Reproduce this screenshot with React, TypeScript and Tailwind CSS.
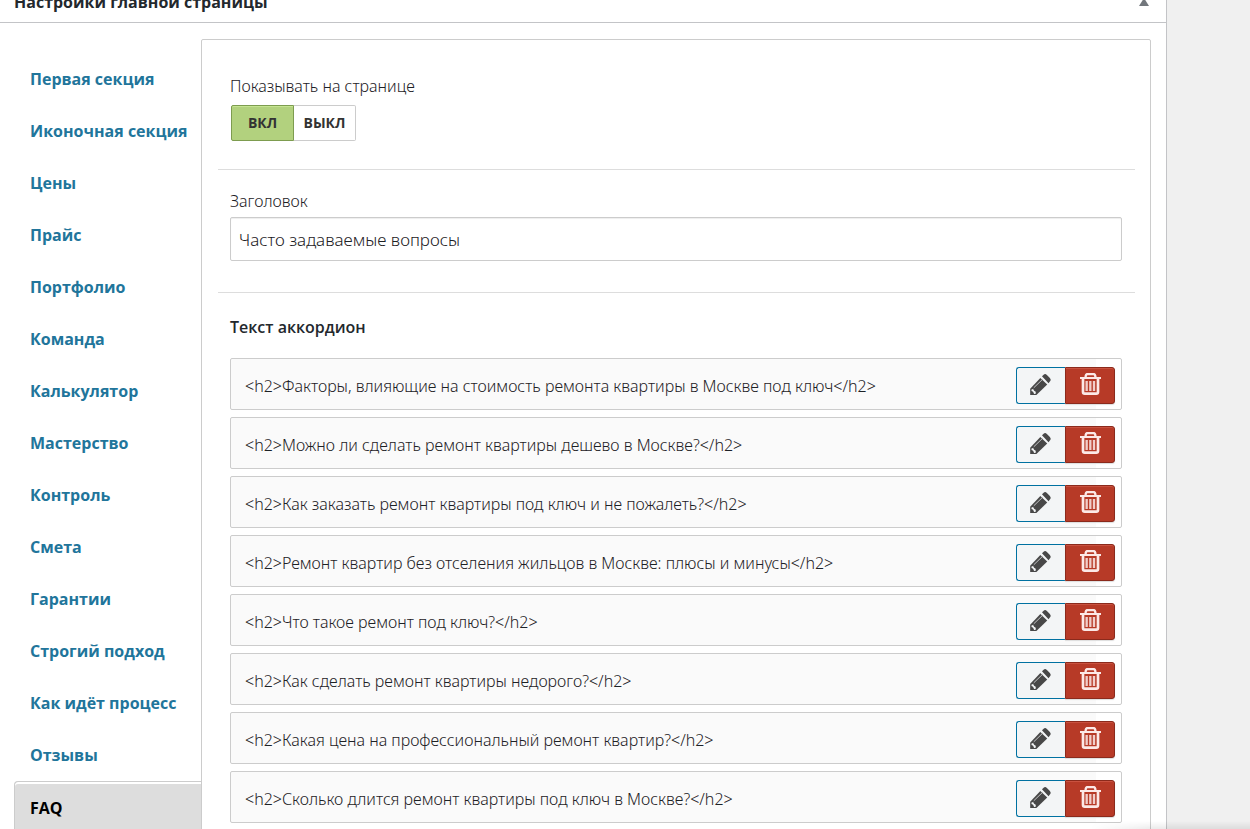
import { useState } from 'react';

const sections = [
  'Первая секция',
  'Иконочная секция',
  'Цены',
  'Прайс',
  'Портфолио',
  'Команда',
  'Калькулятор',
  'Мастерство',
  'Контроль',
  'Смета',
  'Гарантии',
  'Строгий подход',
  'Как идёт процесс',
  'Отзывы',
];

const questions = [
  '<h2>Факторы, влияющие на стоимость ремонта квартиры в Москве под ключ</h2>',
  '<h2>Можно ли сделать ремонт квартиры дешево в Москве?</h2>',
  '<h2>Как заказать ремонт квартиры под ключ и не пожалеть?</h2>',
  '<h2>Ремонт квартир без отселения жильцов в Москве: плюсы и минусы</h2>',
  '<h2>Что такое ремонт под ключ?</h2>',
  '<h2>Как сделать ремонт квартиры недорого?</h2>',
  '<h2>Какая цена на профессиональный ремонт квартир?</h2>',
  '<h2>Сколько длится ремонт квартиры под ключ в Москве?</h2>',
];

function PencilIcon() {
  return (
    <svg viewBox="0 0 63 64" className="h-[21px] w-[21px]" aria-hidden="true">
      <path d="M31 12 52 32 19 64H0V45Z" fill="#484848" />
      <path d="M36 7 41 2Q46-2 51 3L60 12Q65 18 60 23L56 28Z" fill="#484848" />
      <path d="M11 42 38 16" stroke="#c4c5c6" strokeWidth="3" fill="none" />
      <path d="M4 47 9 46 12 51 17 54 17 60 12 61 9 54 4 52Z" fill="#f3f5f6" />
    </svg>
  );
}

function TrashIcon() {
  return (
    <svg viewBox="0 0 63 66" className="h-[22px] w-[21px]" fill="none" stroke="#fce9e7" aria-hidden="true">
      <path d="M0 15H63" strokeWidth="6" />
      <path d="M17 14V9Q18 3 23 3H40Q45 3 46 9V14" strokeWidth="7" />
      <path d="M9 17V57Q9 62 14 62H49Q54 62 54 57V17" strokeWidth="8" />
      <path d="M20 24V54M31 24V54M42 24V54" strokeWidth="7" strokeOpacity="0.85" />
    </svg>
  );
}

export default function App() {
  const [enabled, setEnabled] = useState(true);
  const [title, setTitle] = useState('Часто задаваемые вопросы');

  return (
    <div className="relative flex h-screen overflow-hidden bg-[#f0f0f0] font-['Open_Sans',sans-serif] text-[#1d2125]">
      <main className="flex min-w-0 grow flex-col border-r border-[#c3c4c7] bg-white">
        <header className="flex h-[23px] shrink-0 items-end justify-between border-b border-[#c3c4c7] pr-[17px] pb-2 pl-[14px]">
          <h1 className="text-base leading-6 font-bold text-[#23282d]">Настройки главной страницы</h1>
          <button type="button" aria-label="Свернуть панель" className="flex h-4 items-end pb-2">
            <svg viewBox="0 0 10 8" className="h-2 w-[10px]" aria-hidden="true">
              <path d="M5 0 10 8H0Z" fill="#72777c" />
            </svg>
          </button>
        </header>

        <div className="flex grow items-stretch pt-4 pr-[15px] pl-[14px]">
          <nav className="flex w-[187px] shrink-0 flex-col pt-[14px]">
            {sections.map((name) => (
              <a
                key={name}
                href="#"
                className="flex h-[52px] shrink-0 items-center pl-4 text-base font-bold whitespace-nowrap text-[#21759b]"
              >
                {name}
              </a>
            ))}
            <a
              href="#"
              aria-current="page"
              className="flex h-[52px] shrink-0 items-center rounded-tl-sm border-t border-l border-[#cccccc] bg-[#dddddd] pl-[15px] text-base font-bold text-black shadow-[inset_0_2px_0_#ffffff]"
            >
              FAQ
            </a>
          </nav>

          <div className="min-w-0 grow rounded-t-xs border border-[#cccccc] pr-[15px] pl-4">
            <section className="h-[130px] border-b border-[#dddddd] px-3 pt-[34px]">
              <p id="visibility" className="font-['Noto_Sans',sans-serif] text-base leading-6 font-light">Показывать на странице</p>
              <div role="group" aria-labelledby="visibility" className="mt-[7px] ml-px flex text-sm font-bold text-[#333333]">
                <button
                  type="button"
                  aria-pressed={enabled}
                  onClick={() => setEnabled(true)}
                  className="h-9 w-[63px] rounded-l-xs border border-[#7d9c4f] bg-[#b2d17e] shadow-[inset_0_1px_0_#c5e491]"
                >
                  ВКЛ
                </button>
                <button
                  type="button"
                  aria-pressed={!enabled}
                  onClick={() => setEnabled(false)}
                  className="h-9 w-[62px] rounded-r-xs border border-l-0 border-[#cccccc] bg-white"
                >
                  ВЫКЛ
                </button>
              </div>
            </section>

            <section className="h-[123px] border-b border-[#dddddd] pt-[19px] pr-[13px] pl-3">
              <label htmlFor="title" className="block font-['Noto_Sans',sans-serif] text-base leading-6 font-light">Заголовок</label>
              <input
                id="title"
                type="text"
                value={title}
                onChange={(event) => setTitle(event.target.value)}
                className="mt-1 block h-11 w-full rounded-xs border border-[#cccccc] bg-white px-2 font-['Noto_Sans',sans-serif] text-[17px] font-light shadow-[inset_0_1px_1px_#eeeeee]"
              />
            </section>

            <section className="pt-[22px] pr-[13px] pl-3">
              <h2 className="text-base leading-6 font-semibold text-[#23282d]">Текст аккордион</h2>
              <ul className="mt-[19px] flex flex-col gap-[7px]">
                {questions.map((question) => (
                  <li
                    key={question}
                    className="flex h-[52px] items-center justify-between rounded-xs border border-[#cccccc] bg-[linear-gradient(to_left,#ffffff_25px,#fafafa_25px)] pt-[2px] pr-[6px] pl-[14px]"
                  >
                    <span className="truncate pt-[2px] font-['Noto_Sans',sans-serif] text-base font-light">{question}</span>
                    <div className="flex shrink-0">
                      <button
                        type="button"
                        aria-label="Редактировать"
                        className="flex h-[37px] w-[49px] items-start justify-center rounded-l-[3px] border border-r-0 border-[#0071a1] bg-[#f3f5f6] pt-[6px] pr-[2px]"
                      >
                        <PencilIcon />
                      </button>
                      <button
                        type="button"
                        aria-label="Удалить"
                        className="flex h-[37px] w-[50px] items-start justify-center rounded-r-[3px] border border-[#8b2a1c] bg-[#b73a27] pt-[5px] shadow-[0_1px_1px_#dddddd,inset_0_1px_0_#c9513f]"
                      >
                        <TrashIcon />
                      </button>
                    </div>
                  </li>
                ))}
              </ul>
            </section>
          </div>
        </div>
      </main>
      <aside className="w-[83px] shrink-0" />
      <div className="pointer-events-none absolute right-0 bottom-0 h-2 w-40 bg-linear-to-t from-black/8 to-transparent mask-l-from-60%" />
    </div>
  );
}
